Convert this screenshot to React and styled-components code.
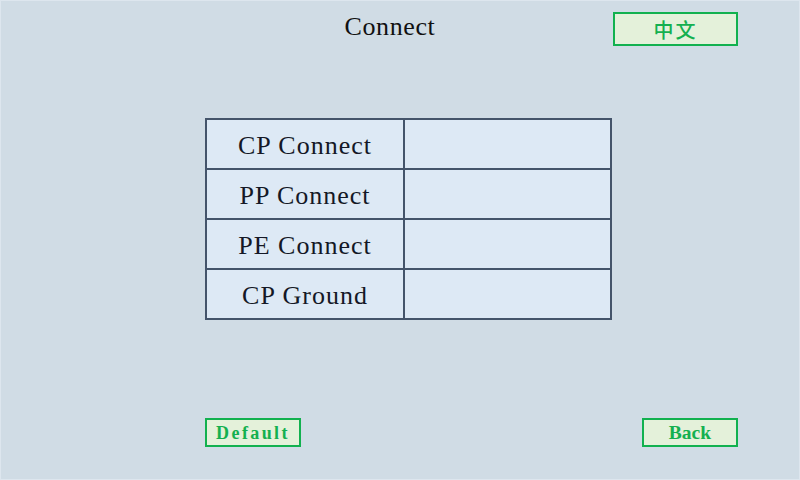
import React from 'react';
import styled, {createGlobalStyle} from 'styled-components';

const GlobalStyle = createGlobalStyle`
	html, body {
		margin: 0;
		padding: 0;
		background: #d0dce5;
	}
`;

const Page = styled.div`
	width: 800px;
	height: 480px;
	box-sizing: border-box;
	border: 1px solid #dde6ee;
	background: #d0dce5;
	display: flex;
	flex-direction: column;
	font-family: "Liberation Serif", "DejaVu Serif", serif;
	overflow: hidden;
`;

const Header = styled.div`
	display: grid;
	grid-template-columns: 1fr auto 1fr;
	align-items: start;
	padding: 11px 61px 0 41px;
	height: 34px;
`;

const Title = styled.h1`
	grid-column: 2;
	margin: 0;
	font-size: 26px;
	font-weight: normal;
	letter-spacing: 0.6px;
	line-height: 30px;
	color: #111;
`;

const Button = styled.button`
	box-sizing: border-box;
	width: ${props => props.width}px;
	height: ${props => props.height}px;
	padding: 0;
	border: 2px solid #12b14f;
	background: #e4f1da;
	color: #14b050;
	font-family: ${props => props.cjk
		? '"Noto Sans CJK SC", sans-serif'
		: '"Liberation Serif", serif'};
	font-size: ${props => props.size}px;
	font-weight: bold;
	letter-spacing: ${props => props.spacing || 0}px;
	line-height: 1;
	display: flex;
	align-items: center;
	justify-content: center;
	cursor: pointer;
`;

const LangButton = styled(Button)`
	grid-column: 3;
	justify-self: end;
	font-weight: 500;
	padding-top: 2px;
`;

const TableWrap = styled.div`
	display: flex;
	justify-content: flex-start;
	padding-left: 204px;
	margin-top: 72px;
`;

const Table = styled.table`
	border-collapse: collapse;
	border: 2px solid #44546a;
`;

const Cell = styled.td`
	box-sizing: border-box;
	width: ${props => props.width}px;
	height: 50px;
	padding: 4px 0 0;
	border: 2px solid #44546a;
	background: #dde9f5;
	text-align: center;
	font-size: 26px;
	letter-spacing: 1px;
	color: #141826;
`;

const Spacer = styled.div`
	flex: 1;
`;

const Footer = styled.div`
	display: flex;
	justify-content: space-between;
	padding: 0 61px 32px 204px;
`;

const rows = ['CP Connect', 'PP Connect', 'PE Connect', 'CP Ground'];

export default function App() {
	return (
		<Page>
			<GlobalStyle />
			<Header>
				<Title>Connect</Title>
				<LangButton cjk width={125} height={34} size={20} spacing={2}>中文</LangButton>
			</Header>
			<TableWrap>
				<Table>
					<tbody>
						{rows.map((label) => (
							<tr key={label}>
								<Cell width={198}>{label}</Cell>
								<Cell width={207}></Cell>
							</tr>
						))}
					</tbody>
				</Table>
			</TableWrap>
			<Spacer />
			<Footer>
				<Button width={96} height={29} size={18} spacing={2.4}>Default</Button>
				<Button width={96} height={29} size={19.5}>Back</Button>
			</Footer>
		</Page>
	);
}
